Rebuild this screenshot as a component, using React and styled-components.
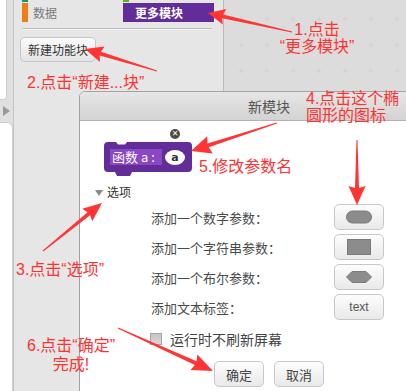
import React from 'react';
import styled, { createGlobalStyle } from 'styled-components';

const CJK = `"Noto Sans CJK SC", "Noto Sans", sans-serif`;
const MIXED = `"Liberation Sans", "Noto Sans CJK SC", sans-serif`;

const GlobalStyle = createGlobalStyle`
  html, body { margin: 0; padding: 0; background: #e6e6e6; }
  #root { width: 406px; height: 391px; }
  *, *::before, *::after { box-sizing: border-box; }
`;

const Stage = styled.div`
  position: relative;
  width: 406px;
  height: 391px;
  overflow: hidden;
  font-family: ${CJK};
  background: #e6e6e6;
`;

const Workspace = styled.div`
  display: flex;
  height: 100%;
`;

/* ---------- left rail ---------- */
const SideRail = styled.div`
  width: 14px;
  display: flex;
  flex-direction: column;
  background: #e0e0e0;
  border-right: 1px solid #c4c4c4;
`;
const RailTop = styled.div`
  width: 7px;
  height: 100px;
  background: #fff;
  border-right: 1px solid #cdcdcd;
  border-bottom: 1px solid #cdcdcd;
  border-bottom-right-radius: 4px;
`;
const RailTab = styled.div`
  height: 22px;
  display: flex;
  align-items: center;
  padding-left: 3px;
  &::before {
    content: '';
    border-left: 7px solid #9a9a9a;
    border-top: 5px solid transparent;
    border-bottom: 5px solid transparent;
  }
`;
const RailBottom = styled.div`
  flex: 1;
  width: 13px;
  background: #fff;
  border-top: 1px solid #cdcdcd;
  border-right: 1px solid #cdcdcd;
  border-top-right-radius: 6px;
`;

/* ---------- palette ---------- */
const Palette = styled.div`
  width: 210px;
  background: #e6e6e6;
  border-right: 1px solid #bababa;
  padding-left: 8px;
`;
const CategoryGrid = styled.div`
  display: grid;
  grid-template-columns: 93px 91px;
  grid-auto-rows: 19px;
  column-gap: 8px;
  row-gap: 1px;
  margin-top: -17px;
`;
const Category = styled.div`
  display: flex;
  align-items: center;
  font-size: 12px;
  color: ${p => (p.$active ? '#fff' : '#7a7a7a')};
  font-weight: ${p => (p.$active ? 700 : 400)};
  background: ${p => (p.$active ? p.$color : 'transparent')};
  padding-left: ${p => (p.$active ? '12px' : '0')};
  &::before {
    content: '';
    display: ${p => (p.$active ? 'none' : 'block')};
    width: 6px;
    height: 100%;
    margin-right: 5px;
    background: ${p => p.$color};
  }
`;
const Divider = styled.div`
  width: 190px;
  height: 1px;
  margin-top: 6px;
  background: #c0c0c0;
  box-shadow: 0 1px 0 #f3f3f3;
`;
const MakeButton = styled.div`
  margin: 8px 0 0 -2px;
  width: 76px;
  height: 25px;
  border: 1px solid #c6c6c6;
  border-radius: 5px;
  background: linear-gradient(#fbfbfb, #e3e3e3);
  display: flex;
  align-items: center;
  justify-content: center;
  font-size: 12px;
  color: #333;
`;

/* ---------- scripts area ---------- */
const Scripts = styled.div`
  flex: 1;
  position: relative;
  background: #dcdcdc;
  overflow: hidden;
`;
const GridSvg = styled.svg`
  display: block;
`;

/* ---------- dialog ---------- */
const Dialog = styled.div`
  position: absolute;
  left: 79px;
  top: 91px;
  width: 380px;
  height: 320px;
  background: #fff;
  border: 1px solid #a2a2a2;
  border-radius: 6px 6px 0 0;
  overflow: hidden;
`;
const TitleBar = styled.div`
  height: 29px;
  border-bottom: 1px solid #b2b2b2;
  background: linear-gradient(#e6e6e6, #d3d3d3);
  display: flex;
  align-items: center;
  justify-content: center;
  font-size: 14px;
  color: #555;
`;
const DialogBody = styled.div`
  padding-top: 21px;
  display: flex;
  flex-direction: column;
`;
const BlockWrap = styled.div`
  position: relative;
  margin-left: 24px;
  width: 90px;
  height: 34px;
`;
const BlockShape = styled.svg`
  position: absolute;
  left: 0;
  top: 0;
`;
const BlockContent = styled.div`
  position: relative;
  height: 30px;
  display: flex;
  align-items: center;
  padding-left: 6px;
  gap: 3px;
`;
const BlockLabel = styled.div`
  width: 52px;
  height: 16px;
  background: #8b46c3;
  color: #fff;
  font-size: 13px;
  line-height: 16px;
  padding-left: 2px;
  white-space: nowrap;
`;
const ParamOval = styled.div`
  width: 20px;
  height: 15px;
  border-radius: 50%;
  background: #fff;
  color: #333;
  font-family: "DejaVu Sans", sans-serif;
  font-weight: 700;
  font-size: 11px;
  display: flex;
  align-items: center;
  justify-content: center;
`;
const CloseBadge = styled.div`
  position: absolute;
  left: 66px;
  top: -13px;
  width: 10px;
  height: 10px;
  border-radius: 50%;
  background: #4a4a4a;
  color: #fff;
  font-family: "DejaVu Sans", sans-serif;
  font-size: 8px;
  font-weight: 700;
  line-height: 10px;
  text-align: center;
`;
const OptionsToggle = styled.div`
  margin-top: 9px;
  padding-left: 15px;
  display: flex;
  align-items: center;
  gap: 4px;
  font-size: 12px;
  line-height: 14px;
  color: #333;
  &::before {
    content: '';
    border-top: 6px solid #8a8a8a;
    border-left: 4px solid transparent;
    border-right: 4px solid transparent;
    margin-top: 2px;
  }
`;
const OptionGrid = styled.div`
  margin-top: 5px;
  padding-left: 71px;
  display: grid;
  grid-template-columns: 183px 50px;
  grid-auto-rows: 26px;
  row-gap: 4px;
  align-items: center;
`;
const OptionLabel = styled.div`
  font-size: 13px;
  color: #4a4a4a;
  white-space: nowrap;
`;
const GrayButton = styled.div`
  width: 50px;
  height: 26px;
  border: 1px solid #c8c8c8;
  border-radius: 5px;
  background: linear-gradient(#fdfdfd, #e9e9e9);
  display: flex;
  align-items: center;
  justify-content: center;
  font-size: 13px;
  color: #444;
`;
const TextTag = styled.span`
  font-family: "Liberation Sans", sans-serif;
  font-size: 12px;
  color: #555;
`;
const ShapeIcon = styled.svg`
  display: block;
`;
const CheckRow = styled.div`
  margin-top: 12px;
  padding-left: 70px;
  display: flex;
  align-items: center;
  gap: 8px;
  font-size: 14px;
  color: #444;
  line-height: 14px;
`;
const CheckBox = styled.div`
  width: 12px;
  height: 12px;
  border: 1px solid #a6a6a6;
  background: linear-gradient(#c4c4c4, #d8d8d8);
`;
const Footer = styled.div`
  margin-top: 15px;
  padding-left: 134px;
  display: flex;
  gap: 10px;
`;

/* ---------- annotations ---------- */
const Overlay = styled.svg`
  position: absolute;
  left: 0;
  top: 0;
  pointer-events: none;
`;
const Note = styled.div`
  position: absolute;
  left: ${p => p.$x}px;
  top: ${p => p.$y}px;
  width: ${p => (p.$w ? `${p.$w}px` : 'auto')};
  text-align: ${p => (p.$center ? 'center' : 'left')};
  font-family: ${MIXED};
  font-size: 16px;
  line-height: ${p => p.$lh || 17}px;
  color: #ff3232;
  white-space: nowrap;
`;

function arrowPoints(t, p, { tail = 1, shaft = 4, head = 16, len = 15, sweep = 2 } = {}) {
  const dx = p[0] - t[0];
  const dy = p[1] - t[1];
  const L = Math.hypot(dx, dy);
  const ux = dx / L;
  const uy = dy / L;
  const nx = -uy;
  const ny = ux;
  const bx = p[0] - ux * len;
  const by = p[1] - uy * len;
  const pts = [
    [t[0] + (nx * tail) / 2, t[1] + (ny * tail) / 2],
    [bx + (nx * shaft) / 2, by + (ny * shaft) / 2],
    [bx - ux * sweep + (nx * head) / 2, by - uy * sweep + (ny * head) / 2],
    p,
    [bx - ux * sweep - (nx * head) / 2, by - uy * sweep - (ny * head) / 2],
    [bx - (nx * shaft) / 2, by - (ny * shaft) / 2],
    [t[0] - (nx * tail) / 2, t[1] - (ny * tail) / 2],
  ];
  return pts.map(q => `${q[0].toFixed(1)},${q[1].toFixed(1)}`).join(' ');
}

const arrows = [
  { t: [292, 32], p: [208, 13], o: { head: 16, len: 15 } },
  { t: [157, 71], p: [85, 49], o: { head: 16, len: 16 } },
  { t: [43, 251], p: [102, 203], o: { head: 16, len: 17 } },
  { t: [357, 140], p: [357, 205], o: { head: 17, len: 17 } },
  { t: [277, 123], p: [191, 151], o: { head: 18, len: 18 } },
  { t: [118, 328], p: [213, 371], o: { head: 17, len: 19 } },
];

/* the top row is scrolled out of view: only its colour bars peek in */
const categories = [
  { id: 'pen', label: '', color: '#0e9a6c' },
  { id: 'ops', label: '', color: '#5cb712' },
  { id: 'data', label: '数据', color: '#ee7d16' },
  { id: 'more', label: '更多模块', color: '#632d99', active: true },
];

const options = [
  { label: '添加一个数字参数：', shape: 'oval' },
  { label: '添加一个字符串参数：', shape: 'rect' },
  { label: '添加一个布尔参数：', shape: 'hex' },
  { label: '添加文本标签：', shape: 'text' },
];

function Shape({ kind }) {
  if (kind === 'text') return <TextTag>text</TextTag>;
  return (
    <ShapeIcon width="26" height="16" viewBox="0 0 26 16">
      {kind === 'oval' && <rect x="0.5" y="2" width="25" height="12" rx="6" fill="#8c8c8c" stroke="#7a7a7a" />}
      {kind === 'rect' && <rect x="1.5" y="0.5" width="23" height="15" fill="#8c8c8c" stroke="#7a7a7a" />}
      {kind === 'hex' && <polygon points="0.5,8 6,2.5 20,2.5 25.5,8 20,13.5 6,13.5" fill="#8c8c8c" stroke="#7a7a7a" />}
    </ShapeIcon>
  );
}

export default function App() {
  return (
    <Stage>
      <GlobalStyle />
      <Workspace>
        <SideRail>
          <RailTop />
          <RailTab />
          <RailBottom />
        </SideRail>
        <Palette>
          <CategoryGrid>
            {categories.map(c => (
              <Category key={c.id} $color={c.color} $active={c.active}>
                {c.label}
              </Category>
            ))}
          </CategoryGrid>
          <Divider />
          <MakeButton>新建功能块</MakeButton>
        </Palette>
        <Scripts>
          <GridSvg width="183" height="100">
            <defs>
              <pattern id="plusGrid" width="26" height="26" patternUnits="userSpaceOnUse" x="4" y="6">
                <path d="M10.5 13h5M13 10.5v5" stroke="#d0d0d0" strokeWidth="1" />
              </pattern>
            </defs>
            <rect width="183" height="100" fill="url(#plusGrid)" />
          </GridSvg>
        </Scripts>
      </Workspace>

      <Dialog>
        <TitleBar>新模块</TitleBar>
        <DialogBody>
          <BlockWrap>
            <BlockShape width="90" height="35" viewBox="0 0 90 35">
              <path
                d="M0,4 Q0,0 4,0 L12,0 L14,2.5 L21,2.5 L23,0 L84,0 Q88,0 88,4 L88,26 Q88,30 84,30 L28,30 L26,34 L13,34 L11,30 L4,30 Q0,30 0,26 Z"
                fill="#632d99"
              />
            </BlockShape>
            <BlockContent>
              <BlockLabel>函数 a :</BlockLabel>
              <ParamOval>a</ParamOval>
            </BlockContent>
            <CloseBadge>✕</CloseBadge>
          </BlockWrap>
          <OptionsToggle>选项</OptionsToggle>
          <OptionGrid>
            {options.map(o => (
              <React.Fragment key={o.label}>
                <OptionLabel>{o.label}</OptionLabel>
                <GrayButton>
                  <Shape kind={o.shape} />
                </GrayButton>
              </React.Fragment>
            ))}
          </OptionGrid>
          <CheckRow>
            <CheckBox />
            运行时不刷新屏幕
          </CheckRow>
          <Footer>
            <GrayButton>确定</GrayButton>
            <GrayButton>取消</GrayButton>
          </Footer>
        </DialogBody>
      </Dialog>

      <Overlay width="406" height="391" viewBox="0 0 406 391">
        {arrows.map((a, i) => (
          <polygon key={i} points={arrowPoints(a.t, a.p, a.o)} fill="#ff3434" />
        ))}
      </Overlay>

      <Note $x={267} $y={21} $w={100} $center>
        1.点击
        <br />
        “更多模块”
      </Note>
      <Note $x={27} $y={74}>2.点击“新建...块”</Note>
      <Note $x={306} $y={90}>
        4.点击这个椭
        <br />
        圆形的图标
      </Note>
      <Note $x={199} $y={158}>5.修改参数名</Note>
      <Note $x={16} $y={261}>3.点击“选项”</Note>
      <Note $x={21} $y={336} $w={100} $center $lh={19}>
        6.点击“确定”
        <br />
        完成!
      </Note>
    </Stage>
  );
}
